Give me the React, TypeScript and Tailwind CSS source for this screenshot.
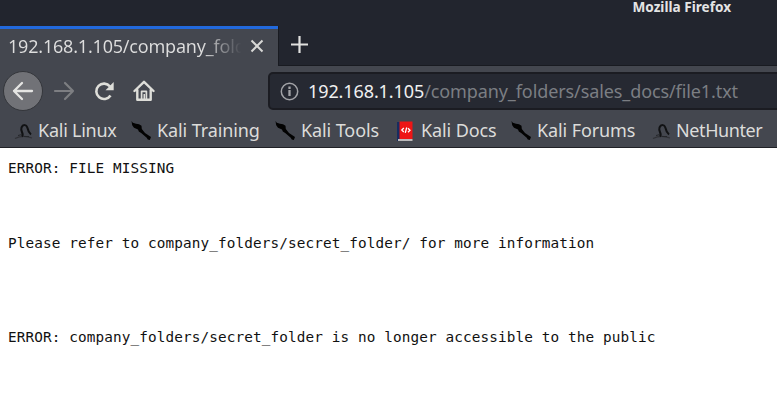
import { ReactNode } from "react";

const ui = "font-['Noto_Sans','Open_Sans',sans-serif]";

function Snake() {
  return (
    <svg width="20" height="20" viewBox="0 0 20 20" fill="none">
      <path d="M1 17.5Q9 13.5 18 17" stroke="#303136" strokeWidth="1.2" />
      <path d="M8 15.5C10.5 12.5 6 10.5 7.5 6.5C9 3 12.5 3.5 13.5 7C14.2 10.5 15 12 17 13.5" stroke="#111214" strokeWidth="2" />
      <path d="M4 14.5l4-1M10 15.5h5" stroke="#24262a" />
    </svg>
  );
}

function Knife() {
  return (
    <svg width="21" height="20" viewBox="0 0 21 20" fill="#020202">
      <path d="M.5 0L1.8 1.8L5 2.8L8 3.2L10.5 4.8L10.8 8L14 12L20 16L18.8 19L16.8 18.6L15.7 16.8L10.5 12.2L7.8 10.5L7 8.4L3 6.8L1.2 4.2Z" />
    </svg>
  );
}

function Docs() {
  return (
    <svg width="16" height="21" viewBox="0 0 16 21">
      <path d="M0 1h3v19H0z" fill="#172c60" />
      <path d="M2.5.5H15.5V18H2.5z" fill="#ee1515" />
      <path d="M1 18h14.5v2H1z" fill="#bcbabb" />
      <path d="M6.8 7L4.8 9l2 2M11 7.3l2 2-2 2M9.7 6.5L8.3 11.8" stroke="#fff" strokeWidth="1.3" fill="none" />
    </svg>
  );
}

function Bookmark({ icon, children, slot, label }: { icon: ReactNode; children: string; slot: string; label: string }) {
  return (
    <div className={`flex h-full shrink-0 items-center ${slot}`}>
      <span className="flex w-6 shrink-0">{icon}</span>
      <span className={`-mt-[2px] whitespace-nowrap ${label}`}>{children}</span>
    </div>
  );
}

export default function App() {
  return (
    <div className={`flex h-[406px] w-[777px] flex-col overflow-hidden bg-white ${ui}`}>
      <header className="flex h-[26px] shrink-0 justify-end bg-[#22252e] pr-[46px]">
        <span className="h-[14px] text-[13.6px] leading-[14px] font-bold text-[#e4e4e4]">Mozilla Firefox</span>
      </header>
      <div className="flex h-[40px] shrink-0 bg-[#22252e]">
        <div className="flex w-[278px] items-center border-t-[3px] border-[#2269dc] bg-[#44474f] pl-[8px] text-[#dedede]">
          <span className="-mt-[4px] w-[236px] overflow-hidden bg-linear-to-r from-[#dedede] from-82% to-transparent to-99% bg-clip-text text-[18px] leading-7 tracking-[-0.2px] whitespace-nowrap text-transparent">192.168.1.105/company_folders</span>
          <svg width="14" height="14" viewBox="0 0 14 14" stroke="#d8d8d6" strokeWidth="2" className="-mt-[3px] ml-[6px] shrink-0"><path d="M1.5 1.5l11 11M12.5 1.5l-11 11" /></svg>
        </div>
        <div className="flex flex-1 border-b border-l border-[#191b21] pt-[9px] pl-[11px]">
          <svg width="19" height="19" viewBox="0 0 19 19" stroke="#e1e1df" strokeWidth="2.2"><path d="M9.5 1v17M1 9.5h17" /></svg>
        </div>
      </div>
      <nav className="flex h-[49px] shrink-0 bg-[#44474f] pt-[5px]">
        <div className="ml-[3px] flex size-10 shrink-0 items-center justify-center rounded-full border border-[#34363b] bg-[#717277]">
          <svg width="22" height="20" viewBox="0 0 22 20" fill="none" stroke="#e5e5e3" strokeWidth="2.3" strokeLinecap="round" strokeLinejoin="round"><path d="M20 10H2M10 2L2 10l8 8" /></svg>
        </div>
        <svg className="mt-[10px] ml-[10px] shrink-0" width="22" height="20" viewBox="0 0 22 20" fill="none" stroke="#7d7e82" strokeWidth="2.2" strokeLinecap="round" strokeLinejoin="round"><path d="M2 10h18M12 2l8 8-8 8" /></svg>
        <svg className="mt-[10px] ml-[19px] shrink-0" width="22" height="20" viewBox="0 0 22 20" fill="none" stroke="#deded9" strokeWidth="2.6"><path d="M16.5 14.5A7.7 7.7 0 1 1 16 5.5" /><path d="M11.5 9.2h8.2V1z" fill="#deded9" stroke="none" /></svg>
        <svg className="mt-[9px] ml-[17px] shrink-0" width="22" height="22" viewBox="0 0 22 22" fill="none" stroke="#deded9" strokeWidth="2.4" strokeLinejoin="round"><path d="M1.5 11L11 1.8 20.5 11M4.3 10v9.7h13.4V10" strokeLinecap="round" /><path d="M8.6 19v-7.7h4.8V19" strokeWidth="1.7" /><path d="M10.5 14h1.5v5h-1.5z" fill="#deded9" stroke="none" /></svg>
        <div className="mt-px ml-[113px] flex h-[38px] w-[520px] shrink-0 items-center rounded-l-[5px] border-2 border-[#1b1c22] bg-[#262932] pl-[10px] text-[18px]">
          <svg className="shrink-0" width="19" height="19" viewBox="0 0 19 19" fill="none" stroke="#a2a3a7"><circle cx="9.5" cy="9.5" r="8.2" strokeWidth="1.5" /><path d="M9.5 8v6M9.5 4.5V7" strokeWidth="2.3" /></svg>
          <span className="ml-[9px] tracking-[-0.1px] whitespace-nowrap text-[#f0f0f0]">192.168.1.105<span className="text-[#7b7e83]">/company_folders/sales_docs/file1.txt</span></span>
        </div>
      </nav>
      <div className="flex h-[33px] shrink-0 border-b border-[#202126] bg-[#44474f] pl-[14px] text-[18px] tracking-[-0.1px] text-[#dcdcda]">
        <Bookmark icon={<Snake />} slot="w-[117px]" label="tracking-[-0.25px]">Kali Linux</Bookmark>
        <Bookmark icon={<Knife />} slot="w-[144px]" label="ml-[2px]">Kali Training</Bookmark>
        <Bookmark icon={<Knife />} slot="w-[122px]" label="ml-[2px]">Kali Tools</Bookmark>
        <Bookmark icon={<Docs />} slot="w-[114px]" label="">Kali Docs</Bookmark>
        <Bookmark icon={<Knife />} slot="w-[141px]" label="ml-[2px]">Kali Forums</Bookmark>
        <Bookmark icon={<Snake />} slot="w-[125px]" label="tracking-[-0.4px]">NetHunter</Bookmark>
      </div>
      <main className="flex flex-col pt-[12px] pl-2 font-['DejaVu_Sans_Mono',monospace] text-[14.35px] leading-4 tracking-[0.115px] whitespace-pre text-[#111]">
        <p>ERROR: FILE MISSING</p>
        <p className="mt-[59px]">Please refer to company_folders/secret_folder/ for more information</p>
        <p className="mt-[78px]">ERROR: company_folders/secret_folder is no longer accessible to the public</p>
      </main>
    </div>
  );
}
